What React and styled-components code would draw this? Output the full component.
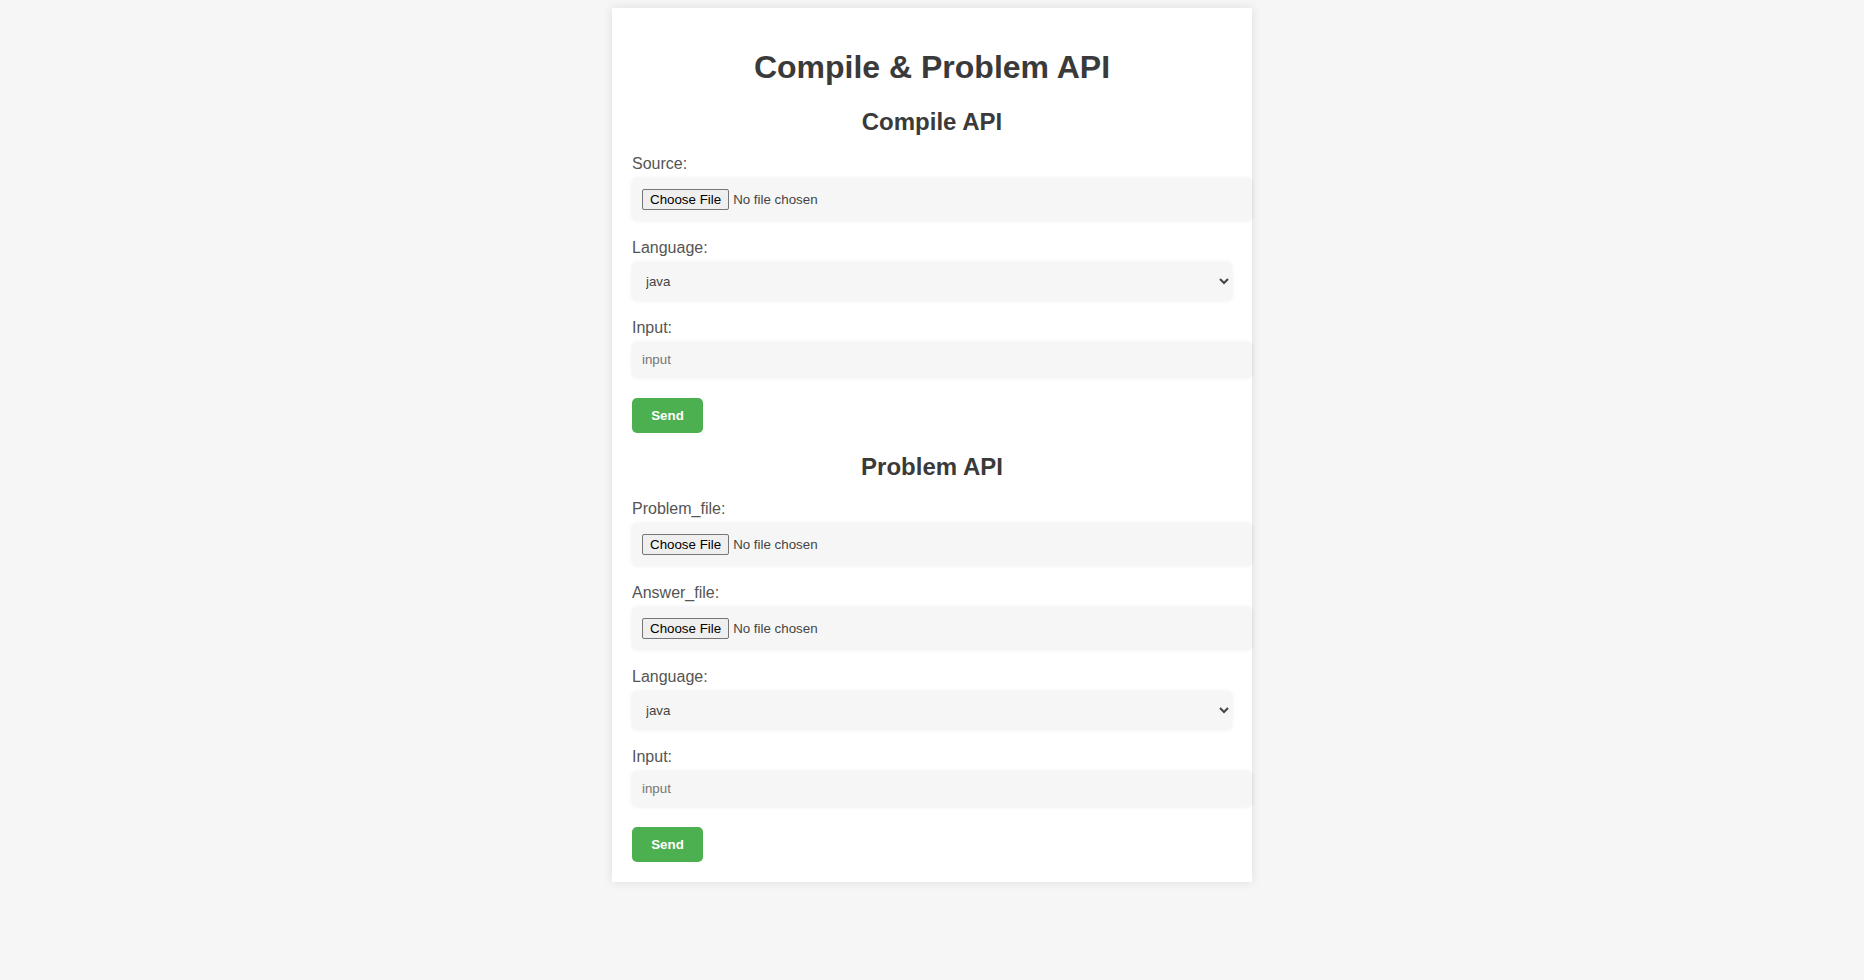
import React from "react";
import styled, { createGlobalStyle } from "styled-components";

const GlobalStyle = createGlobalStyle`
  html, body {
    margin: 0;
    padding: 0;
    background: #f6f6f6;
    font-family: "Liberation Sans", Arial, sans-serif;
  }
`;

const Page = styled.div`
  min-height: 100vh;
  padding-top: 8px;
  box-sizing: border-box;
`;

const Card = styled.div`
  width: 600px;
  margin: 0 auto;
  padding: 20px;
  background: #ffffff;
  box-shadow: 0 0 10px rgba(0, 0, 0, 0.1);
`;

const Title = styled.h1`
  margin: 21.44px 0;
  text-align: center;
  font-size: 32px;
  line-height: 36.8px;
  font-weight: bold;
  color: #3a3a3a;
`;

const SectionTitle = styled.h2`
  margin: 19.92px 0;
  text-align: center;
  font-size: 24px;
  line-height: 27.6px;
  font-weight: bold;
  color: #3a3a3a;
`;

const Form = styled.form`
  display: flex;
  flex-direction: column;
  align-items: flex-start;
`;

const Label = styled.label`
  display: block;
  margin-bottom: 4.5px;
  font-size: 16px;
  line-height: 18.4px;
  color: #555555;
`;

const Field = styled.div`
  display: flex;
  align-items: center;
  width: 620px;
  height: ${(p) => p.$height}px;
  margin-bottom: ${(p) => p.$gap}px;
  padding: 0 10px;
  box-sizing: border-box;
  border-radius: 5px;
  background: #f6f6f6;
  box-shadow: 0 0 4px rgba(0, 0, 0, 0.07);
`;

const FileInput = styled.input`
  margin: 0;
  padding: 0;
  border: none;
  background: transparent;
  font-family: "Liberation Sans", Arial, sans-serif;
  font-size: 13.333px;
  color: #444;

  &::file-selector-button {
    height: 21px;
    margin-right: 4px;
    padding: 0 7px;
    border: 1px solid #767676;
    border-radius: 2px;
    background: #efefef;
    font-family: "Liberation Sans", Arial, sans-serif;
    font-size: 13.333px;
    color: #000;
  }
`;

const Select = styled.select`
  width: 600px;
  height: 39px;
  margin: 0 0 18px;
  padding: 0 10px;
  box-sizing: border-box;
  border: none;
  border-radius: 5px;
  background: #f6f6f6;
  box-shadow: 0 0 4px rgba(0, 0, 0, 0.07);
  font-family: "Liberation Sans", Arial, sans-serif;
  font-size: 13.333px;
  color: #444;
  outline: none;
`;

const TextInput = styled.input`
  width: 620px;
  height: 36px;
  margin: 0 0 20px;
  padding: 0 10px;
  box-sizing: border-box;
  border: none;
  border-radius: 5px;
  background: #f6f6f6;
  box-shadow: 0 0 4px rgba(0, 0, 0, 0.07);
  font-family: "Liberation Sans", Arial, sans-serif;
  font-size: 13.333px;
  color: #444;
  outline: none;

  &::placeholder {
    color: #757575;
  }
`;

const SendButton = styled.button`
  width: 71px;
  height: 35px;
  padding: 0;
  border: none;
  border-radius: 5px;
  background: #4caf50;
  color: #ffffff;
  font-family: "Liberation Sans", Arial, sans-serif;
  font-size: 13.333px;
  font-weight: bold;
  cursor: pointer;
`;

function FileField({ id, label }) {
  return (
    <>
      <Label htmlFor={id}>{label}</Label>
      <Field $height={43} $gap={18}>
        <FileInput id={id} type="file" />
      </Field>
    </>
  );
}

function LanguageField({ id }) {
  return (
    <>
      <Label htmlFor={id}>Language:</Label>
      <Select id={id} defaultValue="java">
        <option value="java">java</option>
        <option value="python">python</option>
        <option value="cpp">cpp</option>
      </Select>
    </>
  );
}

function InputField({ id }) {
  return (
    <>
      <Label htmlFor={id}>Input:</Label>
      <TextInput id={id} type="text" placeholder="input" />
    </>
  );
}

export default function App() {
  return (
    <Page>
      <GlobalStyle />
      <Card>
        <Title>Compile &amp; Problem API</Title>

        <SectionTitle>Compile API</SectionTitle>
        <Form onSubmit={(e) => e.preventDefault()}>
          <FileField id="source" label="Source:" />
          <LanguageField id="compile-language" />
          <InputField id="compile-input" />
          <SendButton type="submit">Send</SendButton>
        </Form>

        <SectionTitle>Problem API</SectionTitle>
        <Form onSubmit={(e) => e.preventDefault()}>
          <FileField id="problem-file" label="Problem_file:" />
          <FileField id="answer-file" label="Answer_file:" />
          <LanguageField id="problem-language" />
          <InputField id="problem-input" />
          <SendButton type="submit">Send</SendButton>
        </Form>
      </Card>
    </Page>
  );
}
